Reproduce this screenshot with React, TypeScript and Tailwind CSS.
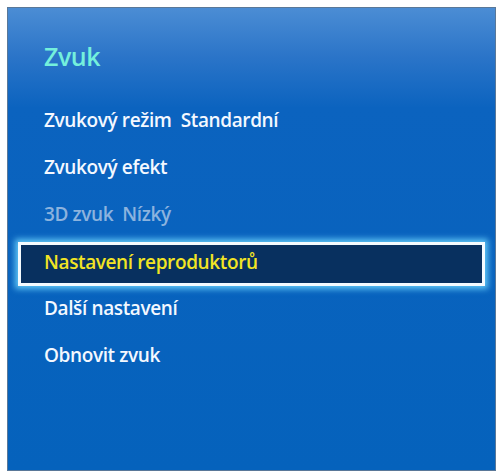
const items = [
  { label: 'Zvukový režim\u00a0 Standardní', state: 'normal' },
  { label: 'Zvukový efekt', state: 'normal' },
  { label: '3D zvuk\u00a0 Nízký', state: 'disabled' },
  { label: 'Nastavení reproduktorů', state: 'selected' },
  { label: 'Další nastavení', state: 'normal' },
  { label: 'Obnovit zvuk', state: 'normal' },
];

export default function App() {
  return (
    <div className="w-[504px] h-[474px] bg-white p-[7px] pr-[8px] pb-[3px] font-['Open_Sans',sans-serif]">
      {/* Menu panel */}
      <div className="h-full border border-[#5a7898] bg-[linear-gradient(180deg,#4b8dd4_0px,#2a74c8_50px,#0b63bf_100px,#0562bc_100%)]">
        <div className="pt-[31px] pl-[36px] h-[89px]">
          <h1 className="text-[25px] leading-[34px] font-semibold tracking-[-0.02em] text-[#74f0dc]">Zvuk</h1>
        </div>

        <ul className="flex flex-col">
          {items.map((item) =>
            item.state === 'selected' ? (
              <li key={item.label} className="h-[47px] pt-[4px] px-[10px]">
                <div className="h-[44px] border-[3px] border-[#f4fbff] bg-[#08305f] shadow-[0_0_6px_3px_rgba(110,215,255,0.85)] flex items-center pl-[23px] pb-[3px]">
                  <span className="text-[19px] font-semibold tracking-[-0.02em] text-[#f2e424]">{item.label}</span>
                </div>
              </li>
            ) : (
              <li key={item.label} className="h-[47px] flex items-center pl-[36px]">
                <span
                  className={`text-[19px] font-semibold tracking-[-0.02em] ${
                    item.state === 'disabled' ? 'text-[#8cb3de]' : 'text-[#f4f8ff]'
                  }`}
                >
                  {item.label}
                </span>
              </li>
            )
          )}
        </ul>
      </div>
    </div>
  );
}
